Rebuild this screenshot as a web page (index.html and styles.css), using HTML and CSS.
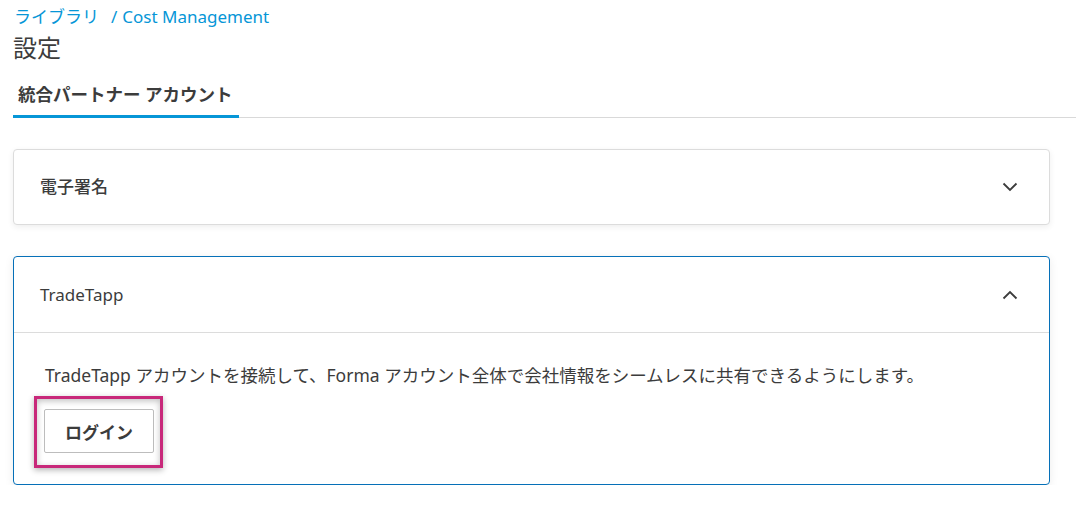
FILE: index.html
```html
<!DOCTYPE html>
<html lang="ja">
<head>
<meta charset="utf-8">
<title>設定</title>
<link rel="stylesheet" href="styles.css">
</head>
<body>
<div class="page">
  <nav class="breadcrumb"><a class="crumb">ライブラリ</a><span class="sep">/</span><a class="crumb">Cost Management</a></nav>
  <h1 class="title">設定</h1>
  <div class="tabs"><div class="tab active">統合パートナー アカウント</div></div>

  <section class="card">
    <div class="card-head">
      <span class="card-title strong">電子署名</span>
      <svg class="chev" width="16" height="10" viewBox="0 0 16 10"><path d="M1.5 1.5 L8 8 L14.5 1.5" fill="none" stroke="#3c3c3c" stroke-width="1.8"/></svg>
    </div>
  </section>

  <section class="card open">
    <div class="card-head">
      <span class="card-title">TradeTapp</span>
      <svg class="chev" width="16" height="10" viewBox="0 0 16 10"><path d="M1.5 8.5 L8 2 L14.5 8.5" fill="none" stroke="#3c3c3c" stroke-width="1.8"/></svg>
    </div>
    <div class="card-body">
      <p class="desc">TradeTapp アカウントを接続して、Forma アカウント全体で会社情報をシームレスに共有できるようにします。</p>
      <div class="highlight"><button class="btn">ログイン</button></div>
    </div>
  </section>
</div>
</body>
</html>
```

FILE: styles.css
```css
html, body {
  margin: 0;
  padding: 0;
  background: #ffffff;
}
body {
  font-family: "Noto Sans", "Noto Sans CJK JP", sans-serif;
  color: #3c3c3c;
}
.page {
  padding: 6px 26px 0 13px;
}
.breadcrumb {
  font-size: 17px;
  line-height: 22px;
  color: #0696d7;
  display: flex;
  align-items: center;
  padding-left: 1px;
}
.crumb {
  color: #0696d7;
  text-decoration: none;
}
.sep {
  margin: 0 5px 0 12px;
}
.title {
  margin: 4px 0 0 0;
  font-size: 24px;
  line-height: 32px;
  font-weight: 400;
  color: #3c3c3c;
}
.tabs {
  margin: 19px -26px 0 0;
  border-bottom: 1px solid #d9d9d9;
  display: flex;
}
.tab {
  font-size: 17.5px;
  font-weight: 700;
  line-height: 22px;
  padding: 0 6px 10px 5px;
  border-bottom: 3px solid transparent;
  margin-bottom: -1px;
}
.tab.active {
  border-bottom-color: #0696d7;
}
.card {
  margin-top: 31px;
  border: 1px solid #dcdcdc;
  border-radius: 4px;
  background: #fff;
  box-shadow: 0 2px 6px rgba(0, 0, 0, 0.07);
}
.card.open {
  border-color: #0670b8;
  box-shadow: 0 2px 10px rgba(0, 0, 0, 0.08);
}
.card-head {
  height: 74px;
  display: flex;
  align-items: center;
  justify-content: space-between;
  padding: 0 31px 0 26px;
}
.card.open .card-head {
  height: 75px;
  border-bottom: 1px solid #dcdcdc;
}
.card-title {
  font-size: 17px;
  line-height: 22px;
  color: #3c3c3c;
}
.card-title.strong {
  font-weight: 500;
}
.chev {
  display: block;
}
.card-body {
  padding: 30px 30px 31px 30px;
}
.desc {
  margin: 0 0 22px 1px;
  font-size: 17.5px;
  line-height: 24px;
  color: #3c3c3c;
}
.highlight {
  position: relative;
  display: inline-block;
  vertical-align: top;
}
.highlight::after {
  content: "";
  position: absolute;
  left: -10px;
  top: -13px;
  right: -9px;
  bottom: -15px;
  border: 3px solid #c8287a;
  box-shadow: 0 2px 6px rgba(0, 0, 0, 0.3), inset 0 2px 6px rgba(0, 0, 0, 0.25);
  pointer-events: none;
}
.btn {
  display: block;
  width: 110px;
  height: 44px;
  margin: 0;
  border: 1px solid #bdbdbd;
  border-radius: 2px;
  background: #fff;
  font-family: "Noto Sans", "Noto Sans CJK JP", sans-serif;
  font-size: 17px;
  font-weight: 700;
  color: #3c3c3c;
}
```
